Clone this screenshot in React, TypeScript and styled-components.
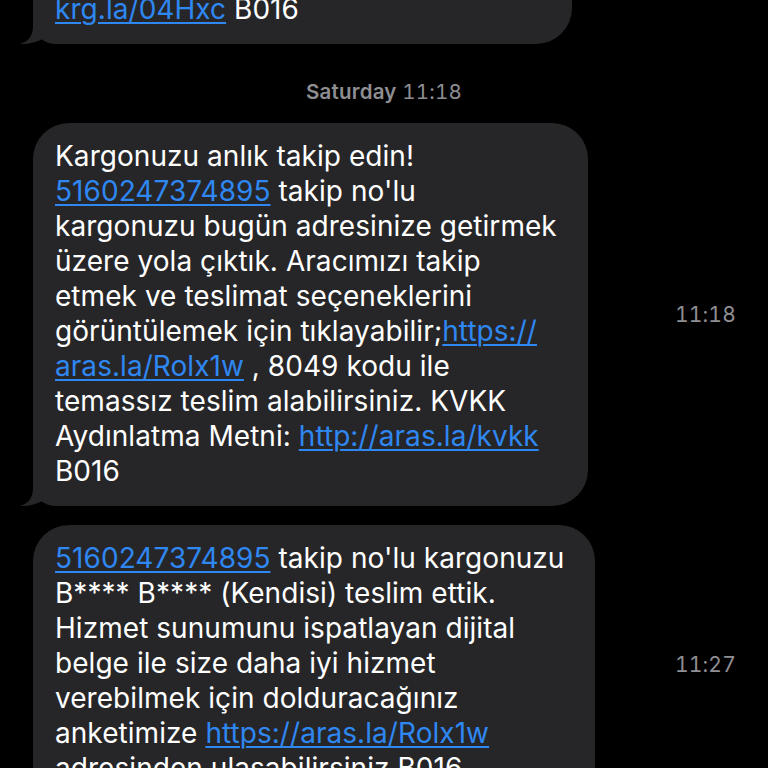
import React from "react";
import styled, { createGlobalStyle } from "styled-components";

const Global = createGlobalStyle`
  html, body {
    margin: 0;
    padding: 0;
    background: #000;
    height: 768px;
    overflow: hidden;
  }
  body {
    font-family: Inter, "Noto Sans", "DejaVu Sans", sans-serif;
    -webkit-font-smoothing: antialiased;
  }
`;

const BUBBLE = "#262628";

const Screen = styled.div`
  width: 768px;
  height: 768px;
  overflow: hidden;
  background: #000;
`;

const Thread = styled.div`
  display: flex;
  flex-direction: column;
  margin-top: -59px;
`;

const Row = styled.div<{ $gap?: number }>`
  display: flex;
  align-items: center;
  justify-content: space-between;
  padding: 0 32px 0 33px;
  margin-top: ${(p) => p.$gap ?? 0}px;
`;

const Bubble = styled.div<{ $w: number }>`
  position: relative;
  width: ${(p) => p.$w}px;
  box-sizing: border-box;
  background: ${BUBBLE};
  border-radius: 36px 36px 36px 22px;
  padding: 16px 0 17px 22px;
  color: #fff;
  font-size: 28px;
  line-height: 35px;
  letter-spacing: 0.05px;
`;

const Line = styled.div`
  white-space: nowrap;
`;

const Link = styled.span`
  color: #2f87f2;
  text-decoration: underline;
  text-decoration-thickness: 2px;
  text-underline-offset: 3px;
`;

const TailSvg = styled.svg`
  position: absolute;
  left: -13px;
  bottom: 0;
  width: 32px;
  height: 30px;
  overflow: visible;
`;

const Tail = () => (
  <TailSvg viewBox="0 0 32 30">
    <path
      d="M13 0 L13 12 C13 21 9 27 1 29.6 C0 30 0 30 2 30 C10 30 17 28 24 24 L24 0 Z"
      fill={BUBBLE}
    />
  </TailSvg>
);

const Time = styled.div`
  color: #8e8e93;
  font-size: 21px;
  font-variant-numeric: tabular-nums;
  letter-spacing: 0.2px;
`;

const DateHeader = styled.div`
  text-align: center;
  color: #8e8e93;
  font-size: 20.5px;
  line-height: 26px;
  margin: 35px 0 18px;
  letter-spacing: 0.2px;
  font-variant-numeric: tabular-nums;
  b {
    font-weight: 600;
  }
`;

export default function App() {
  return (
    <Screen>
      <Global />
      <Thread>
        <Row>
          <Bubble $w={539}>
            <Line>Kargonuzun durumunu takip için:</Line>
            <Line>
              <Link>krg.la/04Hxc</Link> B016
            </Line>
            <Tail />
          </Bubble>
        </Row>

        <DateHeader>
          <b>Saturday</b> 11:18
        </DateHeader>

        <Row>
          <Bubble $w={555}>
            <Line>Kargonuzu anlık takip edin!</Line>
            <Line>
              <Link>5160247374895</Link> takip no'lu
            </Line>
            <Line>kargonuzu bugün adresinize getirmek</Line>
            <Line>üzere yola çıktık. Aracımızı takip</Line>
            <Line>etmek ve teslimat seçeneklerini</Line>
            <Line>
              görüntülemek için tıklayabilir;<Link>https://</Link>
            </Line>
            <Line>
              <Link>aras.la/Rolx1w</Link> , 8049 kodu ile
            </Line>
            <Line>temassız teslim alabilirsiniz. KVKK</Line>
            <Line>
              Aydınlatma Metni: <Link>http://aras.la/kvkk</Link>
            </Line>
            <Line>B016</Line>
            <Tail />
          </Bubble>
          <Time>11:18</Time>
        </Row>

        <Row $gap={19}>
          <Bubble $w={562}>
            <Line>
              <Link>5160247374895</Link> takip no'lu kargonuzu
            </Line>
            <Line>B**** B**** (Kendisi) teslim ettik.</Line>
            <Line>Hizmet sunumunu ispatlayan dijital</Line>
            <Line>belge ile size daha iyi hizmet</Line>
            <Line>verebilmek için dolduracağınız</Line>
            <Line>
              anketimize <Link>https://aras.la/Rolx1w</Link>
            </Line>
            <Line>adresinden ulaşabilirsiniz B016</Line>
            <Tail />
          </Bubble>
          <Time>11:27</Time>
        </Row>
      </Thread>
    </Screen>
  );
}
